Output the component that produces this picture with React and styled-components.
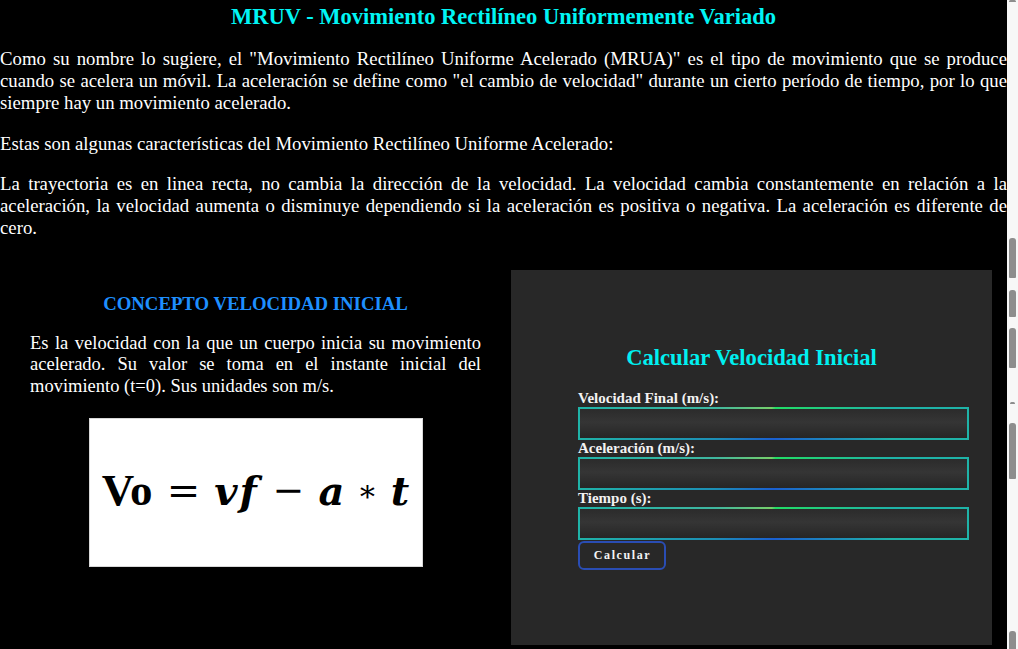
import React from "react";
import styled, { createGlobalStyle } from "styled-components";

const Global = createGlobalStyle`
  html, body {
    margin: 0;
    padding: 0;
    height: 100%;
    overflow: hidden;
    background: #000;
  }
  body {
    font-family: "Liberation Serif", "Times New Roman", serif;
    color: #fff;
  }
  * { box-sizing: border-box; }
`;

const Page = styled.div`
  display: flex;
  width: 1018px;
  height: 649px;
  background: #000;
`;

const Main = styled.main`
  width: 1007px;
  display: flex;
  flex-direction: column;
`;

const Title = styled.h1`
  margin: 4px 0 18.5px;
  font-family: "Liberation Serif", serif;
  font-size: 22.5px;
  line-height: 25px;
  font-weight: bold;
  color: #00f5f5;
  text-align: center;
`;

const Text = styled.p`
  margin: 0 0 ${(p) => p.$gap || 18.5}px;
  font-family: "Liberation Serif", serif;
  font-size: 18.75px;
  line-height: 22px;
  text-align: justify;
  color: #fff;
`;

const Row = styled.section`
  display: flex;
  margin-top: 13px;
`;

const Concept = styled.div`
  width: 511px;
  display: flex;
  flex-direction: column;
  align-items: center;
  padding: 22.5px 30px 0;
`;

const ConceptTitle = styled.h3`
  margin: 0 0 19px;
  font-size: 18.75px;
  line-height: 21px;
  font-weight: bold;
  color: #1e8fff;
  text-align: center;
`;

const ConceptText = styled.p`
  margin: 0 0 20.5px;
  font-size: 18.5px;
  line-height: 21.5px;
  text-align: justify;
  width: 100%;
`;

const FormulaBox = styled.div`
  width: 334px;
  height: 149px;
  background: #fff;
  border: 1px solid #d8d8d8;
  display: flex;
  align-items: center;
  justify-content: center;
  color: #000;
  padding-bottom: 4px;
`;

const Upright = styled.span`
  font-family: "Liberation Serif", serif;
  font-weight: bold;
  font-size: 45px;
`;

const Var = styled.span`
  font-family: "DejaVu Serif", serif;
  font-style: italic;
  font-weight: bold;
  font-size: 40px;
  letter-spacing: ${(p) => p.$ls || 0}px;
`;

const Op = styled.span`
  font-family: "DejaVu Serif", serif;
  font-weight: normal;
  font-size: ${(p) => p.$size || 40}px;
  margin: 0 ${(p) => p.$space || 14}px;
`;

const Panel = styled.div`
  width: 481px;
  height: 375px;
  background: #282828;
  display: flex;
  flex-direction: column;
  padding: 74.5px 23px 0 67px;
`;

const PanelTitle = styled.h2`
  margin: 0 0 20.5px -67px;
  width: 481px;
  font-size: 22.6px;
  line-height: 25px;
  font-weight: bold;
  color: #00f0f0;
  text-align: center;
`;

const Label = styled.label`
  display: block;
  font-size: 15px;
  line-height: 17px;
  font-weight: bold;
  color: #f2f2f2;
`;

const Field = styled.input`
  display: block;
  width: 391px;
  height: 33px;
  border: 2px solid transparent;
  outline: none;
  color: #fff;
  background:
    linear-gradient(180deg, #2b2b2b 0%, #353535 45%, #262626 100%) padding-box,
    linear-gradient(90deg, #1fb3a8 0%, #3fb6a0 35%, #76d06a 49.5%, #22dd66 50.5%, #1fb3a8 80%, #1fb3a8 100%) top / 100% 2px no-repeat border-box,
    linear-gradient(90deg, #1fb3a8 0%, #1c8fb5 35%, #1a5fd0 50%, #1fb3a8 80%, #1fb3a8 100%) bottom / 100% 2px no-repeat border-box,
    #1fb3a8 border-box;
`;

const Button = styled.button`
  margin-top: 1px;
  width: 88px;
  height: 29px;
  background: transparent;
  border: 2px solid #2a4db4;
  border-radius: 6px;
  color: #f4f4f4;
  font-family: "Liberation Serif", serif;
  font-weight: bold;
  font-size: 12px;
  letter-spacing: 1.6px;
  padding: 0 0 0 1px;
  cursor: pointer;
`;

const Spacer = styled.div`
  width: 15px;
`;

const Strip = styled.aside`
  width: 11px;
  height: 649px;
  background: #f7f7f7;
  display: flex;
  flex-direction: column;
  padding-left: 2px;
`;

const Pill = styled.div`
  width: ${(p) => p.$w || 7}px;
  margin-left: ${(p) => (7 - (p.$w || 7)) / 2}px;
  height: ${(p) => p.$h}px;
  margin-top: ${(p) => p.$gap}px;
  background: #8d8d8d;
  border-radius: 3px 3px 1px 1px;
  flex-shrink: 0;
`;

const pills = [
  { gap: 0, h: 2 },
  { gap: 236, h: 40 },
  { gap: 12, h: 27 },
  { gap: 11, h: 40 },
  { gap: 34, h: 2, w: 5 },
  { gap: 19, h: 56 },
  { gap: 152, h: 20 },
];

export default function App() {
  return (
    <>
      <Global />
      <Page>
        <Main>
          <Title>MRUV - Movimiento Rectilíneo Uniformemente Variado</Title>
          <Text $gap={19}>
            Como su nombre lo sugiere, el "Movimiento Rectilíneo Uniforme Acelerado (MRUA)" es el tipo de
            movimiento que se produce cuando se acelera un móvil. La aceleración se define como "el cambio de
            velocidad" durante un cierto período de tiempo, por lo que siempre hay un movimiento acelerado.
          </Text>
          <Text $gap={18}>Estas son algunas características del Movimiento Rectilíneo Uniforme Acelerado:</Text>
          <Text $gap={18.5}>
            La trayectoria es en linea recta, no cambia la dirección de la velocidad. La velocidad cambia
            constantemente en relación a la aceleración, la velocidad aumenta o disminuye dependiendo si la
            aceleración es positiva o negativa. La aceleración es diferente de cero.
          </Text>
          <Row>
            <Concept>
              <ConceptTitle>CONCEPTO VELOCIDAD INICIAL</ConceptTitle>
              <ConceptText>
                Es la velocidad con la que un cuerpo inicia su movimiento acelerado. Su valor se toma en el
                instante inicial del movimiento (t=0). Sus unidades son m/s.
              </ConceptText>
              <FormulaBox>
                <Upright>Vo</Upright>
                <Op $size={40} $space={14}>=</Op>
                <Var $ls={2}>vf</Var>
                <Op $size={38} $space={14}>−</Op>
                <Var>a</Var>
                <Op $size={30} $space={13}>∗</Op>
                <Var>t</Var>
              </FormulaBox>
            </Concept>
            <Panel>
              <PanelTitle>Calcular Velocidad Inicial</PanelTitle>
              <Label htmlFor="vf">Velocidad Final (m/s):</Label>
              <Field id="vf" type="text" />
              <Label htmlFor="ac">Aceleración (m/s):</Label>
              <Field id="ac" type="text" />
              <Label htmlFor="tt">Tiempo (s):</Label>
              <Field id="tt" type="text" />
              <Button type="button">Calcular</Button>
            </Panel>
            <Spacer />
          </Row>
        </Main>
        <Strip>
          {pills.map((p, i) => (
            <Pill key={i} $gap={p.gap} $h={p.h} $w={p.w} />
          ))}
        </Strip>
      </Page>
    </>
  );
}
